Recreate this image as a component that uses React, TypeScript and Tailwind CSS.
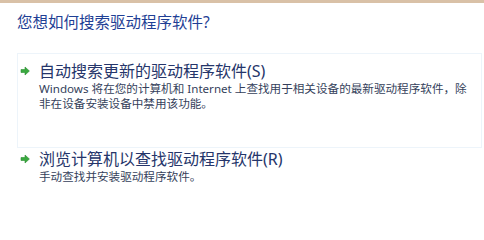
const Arrow = () => (
  <svg width="10" height="10" viewBox="0 0 10 10" className="shrink-0">
    <path d="M1 3.5 H5 V1 L9.4 5 L5 9 V6.5 H1 Z" fill="#3aa93f" stroke="#2b8f32" strokeWidth="0.6" strokeLinejoin="round" />
  </svg>
);

interface OptionProps {
  title: string;
  lines: string[];
  boxed?: boolean;
}

const Option = ({ title, lines, boxed }: OptionProps) => (
  <div
    className={
      boxed
        ? "ml-[17px] mr-[2px] border border-[#edf4fa] pt-[7px] pb-[36px] pl-[2px]"
        : "ml-[17px] mr-[2px] border border-transparent pl-[2px]"
    }
  >
    <div className="flex items-center gap-[9px] h-[20px]">
      <Arrow />
      <span className="text-[16px] leading-[20px] text-[#25356a] whitespace-nowrap">{title}</span>
    </div>
    <div className="pl-[19px] text-[11.6px] leading-[15px] text-[#353f5b] whitespace-nowrap">
      {lines.map((l) => (
        <div key={l}>{l}</div>
      ))}
    </div>
  </div>
);

export default function App() {
  return (
    <div
      className="w-[484px] h-[219px] bg-white overflow-hidden"
      style={{ fontFamily: '"Noto Sans", "Noto Sans CJK SC", sans-serif' }}
    >
      <div className="h-[3px] bg-[#d9c1a7]" />
      <div className="pl-[17px] pt-[9px] text-[15.5px] leading-[20px] text-[#1f3f95] whitespace-nowrap">
        您想如何搜索驱动程序软件?
      </div>
      <div className="mt-[21px]">
        <Option
          boxed
          title="自动搜索更新的驱动程序软件(S)"
          lines={[
            "Windows 将在您的计算机和 Internet 上查找用于相关设备的最新驱动程序软件，除",
            "非在设备安装设备中禁用该功能。",
          ]}
        />
        <Option title="浏览计算机以查找驱动程序软件(R)" lines={["手动查找并安装驱动程序软件。"]} />
      </div>
    </div>
  );
}
